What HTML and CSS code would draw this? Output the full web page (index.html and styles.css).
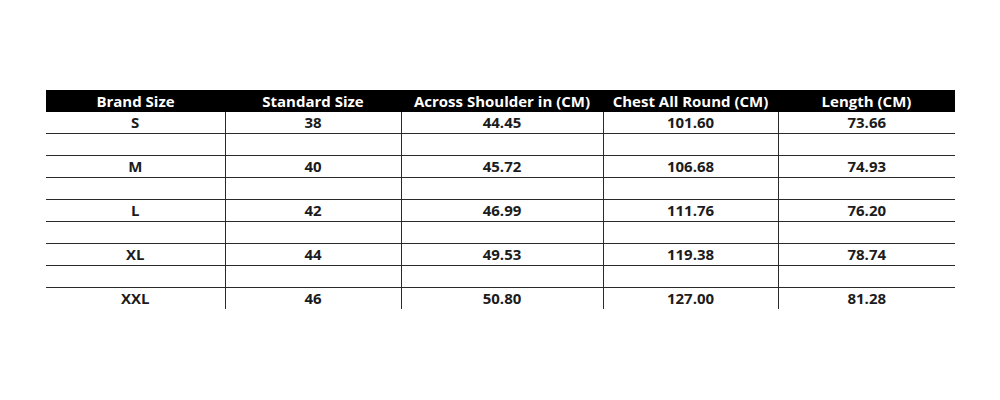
FILE: index.html
```html
<!DOCTYPE html>
<html>
<head>
<meta charset="utf-8">
<link rel="stylesheet" href="styles.css">
</head>
<body>
<table class="size-chart">
  <colgroup>
    <col class="c1"><col class="c2"><col class="c3"><col class="c4"><col class="c5">
  </colgroup>
  <thead>
    <tr><th>Brand Size</th><th>Standard Size</th><th>Across Shoulder in (CM)</th><th>Chest All Round (CM)</th><th>Length (CM)</th></tr>
  </thead>
  <tbody>
    <tr><td>S</td><td>38</td><td>44.45</td><td>101.60</td><td>73.66</td></tr>
    <tr class="blank"><td></td><td></td><td></td><td></td><td></td></tr>
    <tr><td>M</td><td>40</td><td>45.72</td><td>106.68</td><td>74.93</td></tr>
    <tr class="blank"><td></td><td></td><td></td><td></td><td></td></tr>
    <tr><td>L</td><td>42</td><td>46.99</td><td>111.76</td><td>76.20</td></tr>
    <tr class="blank"><td></td><td></td><td></td><td></td><td></td></tr>
    <tr><td>XL</td><td>44</td><td>49.53</td><td>119.38</td><td>78.74</td></tr>
    <tr class="blank"><td></td><td></td><td></td><td></td><td></td></tr>
    <tr class="last"><td>XXL</td><td>46</td><td>50.80</td><td>127.00</td><td>81.28</td></tr>
  </tbody>
</table>
</body>
</html>
```
FILE: styles.css
```css
html, body {
  margin: 0;
  padding: 0;
  background: #ffffff;
}

body {
  padding: 90px 0 0 46px;
  font-family: "Open Sans", "Lato", "Liberation Sans", sans-serif;
}

.size-chart {
  width: 909px;
  border-collapse: collapse;
  table-layout: fixed;
  color: #1c1c1c;
  font-size: 15px;
  font-weight: 700;
}

.c1 { width: 179px; }
.c2 { width: 176px; }
.c3 { width: 202px; }
.c4 { width: 175px; }
.c5 { width: 177px; }

.size-chart th {
  background: #000000;
  color: #ffffff;
  height: 22px;
  padding: 0;
  text-align: center;
  font-weight: 700;
  white-space: nowrap;
  line-height: 22px;
}

.size-chart td {
  height: 21px;
  padding: 0;
  text-align: center;
  border-bottom: 1px solid #2a2a2a;
  border-left: 1px solid #2a2a2a;
  line-height: 21px;
}

.size-chart td:first-child {
  border-left: none;
}

.size-chart tr.last td {
  border-bottom: none;
}
```
